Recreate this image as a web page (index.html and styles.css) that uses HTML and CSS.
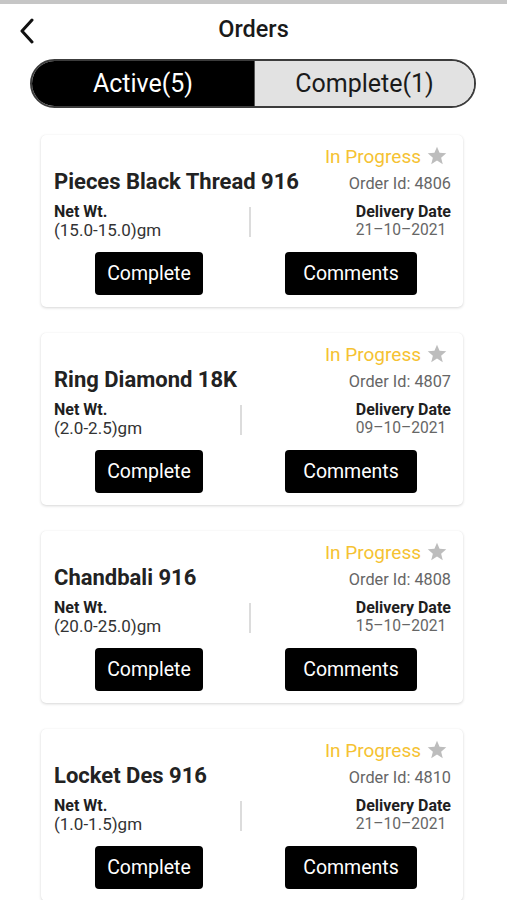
FILE: index.html
```html
<!DOCTYPE html>
<html>
<head>
<meta charset="utf-8">
<link rel="stylesheet" href="styles.css">
</head>
<body>
<div class="topbar"></div>
<header class="header">
  <svg class="back" width="16" height="26" viewBox="0 0 16 26"><path d="M13 2 L3 13 L13 24" fill="none" stroke="#111" stroke-width="3" stroke-linecap="round" stroke-linejoin="round"/></svg>
  <h1 class="title">Orders</h1>
</header>
<div class="segment">
  <div class="seg seg-active">Active(5)</div>
  <div class="seg seg-inactive">Complete(1)</div>
</div>
<main class="list">
  <div class="card">
    <div class="status"><span>In Progress</span><svg class="star" width="20" height="19" viewBox="0 0 24 23"><path d="M12 0.8 L15.1 8.3 L23.2 8.9 L17 14.1 L19 22 L12 17.7 L5 22 L7 14.1 L0.8 8.9 L8.9 8.3 Z" fill="#bdbdbd"/></svg></div>
    <div class="row-title"><span class="name">Pieces Black Thread 916</span><span class="oid">Order Id: 4806</span></div>
    <div class="row-info">
      <div class="info"><div class="lbl">Net Wt.</div><div class="val">(15.0-15.0)gm</div></div>
      <div class="divider"></div>
      <div class="info"><div class="lbl">Delivery Date</div><div class="val gray">21–10–2021</div></div>
    </div>
    <div class="actions"><button class="btn btn-complete">Complete</button><button class="btn btn-comments">Comments</button></div>
  </div>
  <div class="card">
    <div class="status"><span>In Progress</span><svg class="star" width="20" height="19" viewBox="0 0 24 23"><path d="M12 0.8 L15.1 8.3 L23.2 8.9 L17 14.1 L19 22 L12 17.7 L5 22 L7 14.1 L0.8 8.9 L8.9 8.3 Z" fill="#bdbdbd"/></svg></div>
    <div class="row-title"><span class="name">Ring Diamond 18K</span><span class="oid">Order Id: 4807</span></div>
    <div class="row-info">
      <div class="info"><div class="lbl">Net Wt.</div><div class="val">(2.0-2.5)gm</div></div>
      <div class="divider"></div>
      <div class="info"><div class="lbl">Delivery Date</div><div class="val gray">09–10–2021</div></div>
    </div>
    <div class="actions"><button class="btn btn-complete">Complete</button><button class="btn btn-comments">Comments</button></div>
  </div>
  <div class="card">
    <div class="status"><span>In Progress</span><svg class="star" width="20" height="19" viewBox="0 0 24 23"><path d="M12 0.8 L15.1 8.3 L23.2 8.9 L17 14.1 L19 22 L12 17.7 L5 22 L7 14.1 L0.8 8.9 L8.9 8.3 Z" fill="#bdbdbd"/></svg></div>
    <div class="row-title"><span class="name">Chandbali 916</span><span class="oid">Order Id: 4808</span></div>
    <div class="row-info">
      <div class="info"><div class="lbl">Net Wt.</div><div class="val">(20.0-25.0)gm</div></div>
      <div class="divider"></div>
      <div class="info"><div class="lbl">Delivery Date</div><div class="val gray">15–10–2021</div></div>
    </div>
    <div class="actions"><button class="btn btn-complete">Complete</button><button class="btn btn-comments">Comments</button></div>
  </div>
  <div class="card">
    <div class="status"><span>In Progress</span><svg class="star" width="20" height="19" viewBox="0 0 24 23"><path d="M12 0.8 L15.1 8.3 L23.2 8.9 L17 14.1 L19 22 L12 17.7 L5 22 L7 14.1 L0.8 8.9 L8.9 8.3 Z" fill="#bdbdbd"/></svg></div>
    <div class="row-title"><span class="name">Locket Des 916</span><span class="oid">Order Id: 4810</span></div>
    <div class="row-info">
      <div class="info"><div class="lbl">Net Wt.</div><div class="val">(1.0-1.5)gm</div></div>
      <div class="divider"></div>
      <div class="info"><div class="lbl">Delivery Date</div><div class="val gray">21–10–2021</div></div>
    </div>
    <div class="actions"><button class="btn btn-complete">Complete</button><button class="btn btn-comments">Comments</button></div>
  </div>
</main>
</body>
</html>
```
FILE: styles.css
```css
* { box-sizing: border-box; }
html, body { margin: 0; padding: 0; background: #fff; }
body {
  font-family: Roboto, "Noto Sans", "Liberation Sans", sans-serif;
  color: #1c1c1c;
  width: 507px;
  height: 900px;
  overflow: hidden;
}
.topbar { height: 4px; background: #c6c6c6; }
.header {
  position: relative;
  height: 49px;
  display: flex;
  align-items: center;
  justify-content: center;
}
.back { position: absolute; left: 19px; top: 14px; }
.title {
  margin: 0;
  font-size: 23.5px;
  font-weight: 500;
  color: #1a1a1a;
}
.segment {
  margin: 6px 31px 0 30px;
  height: 49px;
  border: 2px solid #3c3c3c;
  border-radius: 25px;
  overflow: hidden;
  display: grid;
  grid-template-columns: 222px 1fr;
}
.seg {
  display: flex;
  align-items: center;
  justify-content: center;
  font-size: 25px;
  padding-bottom: 1px;
}
.seg-active { background: #000; color: #fff; }
.seg-inactive { background: #e2e2e2; color: #1a1a1a; border-left: 1px solid #555; }
.list {
  margin-top: 27px;
  display: flex;
  flex-direction: column;
  gap: 26px;
}
.card {
  margin: 0 44px 0 41px;
  background: #fff;
  border-radius: 5px;
  box-shadow: 0 1px 3px rgba(0,0,0,0.16), 0 0 1px rgba(0,0,0,0.06);
  padding: 10px 12px 12px 13px;
  height: 172px;
}
.status {
  display: flex;
  justify-content: flex-end;
  align-items: center;
  gap: 6px;
  padding-right: 4px;
  height: 22px;
  font-size: 19px;
  color: #f5c232;
}
.star { margin-top: -1px; }
.row-title {
  margin-top: 3px;
  display: flex;
  justify-content: space-between;
  align-items: baseline;
  height: 24px;
  line-height: 24px;
}
.name { font-size: 22px; font-weight: 700; color: #222; }
.oid { font-size: 16.3px; color: #666; }
.row-info {
  margin-top: 9px;
  display: flex;
  justify-content: space-between;
  align-items: center;
  height: 37px;
}
.lbl { font-size: 16px; font-weight: 700; line-height: 18px; color: #1f1f1f; }
.val { font-size: 17px; line-height: 19px; color: #333; }
.val.gray { color: #666; font-size: 15.6px; }
.divider { width: 2px; height: 30px; background: #dcdcdc; margin-left: -16px; }
.actions {
  margin-top: 12px;
  display: flex;
  padding-left: 41px;
  gap: 82px;
}
.btn {
  height: 43px;
  background: #000;
  color: #fff;
  border: none;
  border-radius: 4px;
  font-family: Roboto, "Noto Sans", "Liberation Sans", sans-serif;
  font-size: 19.5px;
  padding: 0;
}
.btn-complete { width: 108px; }
.btn-comments { width: 132px; }
```
